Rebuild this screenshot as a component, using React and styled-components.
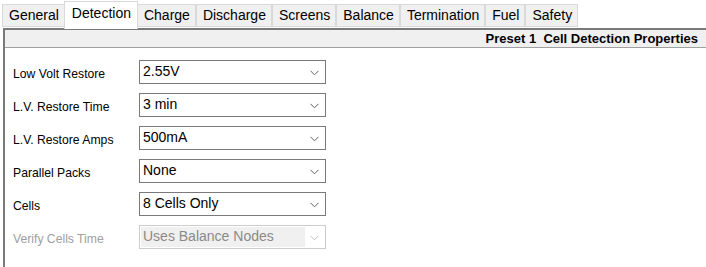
import styled, { createGlobalStyle } from 'styled-components';

const tabs = ['General', 'Detection', 'Charge', 'Discharge', 'Screens', 'Balance', 'Termination', 'Fuel', 'Safety'];

const fields = [
    { label: 'Low Volt Restore', value: '2.55V' },
    { label: 'L.V. Restore Time', value: '3 min' },
    { label: 'L.V. Restore Amps', value: '500mA' },
    { label: 'Parallel Packs', value: 'None' },
    { label: 'Cells', value: '8 Cells Only' },
    { label: 'Verify Cells Time', value: 'Uses Balance Nodes', disabled: true },
];

const GlobalStyle = createGlobalStyle`
  html, body {
    margin: 0;
    padding: 0;
    background: #ffffff;
  }
  body {
    font-family: "Liberation Sans", Arial, sans-serif;
    color: #000;
  }
`;

const Window = styled.div`
  width: 706px;
  height: 267px;
  overflow: hidden;
  background: #ffffff;
  display: flex;
  flex-direction: column;
`;

const TabStrip = styled.div`
  display: flex;
  align-items: flex-end;
  height: 28px;
  padding-left: 2px;
  position: relative;
  z-index: 1;
`;

const Tab = styled.div`
  box-sizing: border-box;
  height: ${props => props.$active ? '28px' : '23px'};
  margin-bottom: ${props => props.$active ? '-1px' : '1px'};
  padding: ${props => props.$active ? '3px 6px 0 7px' : '2px 5px 0 6px'};
  font-size: 14px;
  line-height: 17px;
  background: ${props => props.$active ? '#ffffff' : '#f0f0f0'};
  border: 1px solid #d9d9d9;
  border-bottom: ${props => props.$active ? 'none' : '1px solid #d9d9d9'};
  margin-left: ${props => props.$active ? '-1px' : '0'};
  margin-right: ${props => props.$active ? '-1px' : '0'};
  position: relative;
  z-index: ${props => props.$active ? 2 : 1};
  & + & {
    border-left: ${props => props.$active ? '1px solid #d9d9d9' : 'none'};
  }
  white-space: nowrap;
`;

const Panel = styled.div`
  flex: 1;
  margin-left: 3px;
  border-top: 2px solid #7a7a7a;
  border-left: 2px solid #7a7a7a;
  display: flex;
  flex-direction: column;
`;

const Header = styled.div`
  height: 17px;
  background: #f0f0f0;
  border-bottom: 1px solid #a0a0a0;
  display: flex;
  justify-content: flex-end;
  align-items: center;
  padding-right: 8px;
  font-size: 13px;
  font-weight: bold;
  white-space: pre;
`;

const Form = styled.div`
  display: grid;
  grid-template-columns: 126px 187px;
  grid-auto-rows: 24px;
  row-gap: 9px;
  padding: 12px 0 0 8px;
  align-items: center;
`;

const Label = styled.div`
  font-size: 12.2px;
  padding-top: 3px;
  color: ${props => props.$disabled ? '#a0a0a0' : '#000000'};
  white-space: nowrap;
`;

const Combo = styled.div`
  box-sizing: border-box;
  height: 24px;
  border: 1px solid ${props => props.$disabled ? '#cccccc' : '#7a7a7a'};
  background: #ffffff;
  display: flex;
  align-items: stretch;
  padding: 1px;
`;

const ComboText = styled.div`
  flex: 1;
  font-size: 14px;
  line-height: 19px;
  padding-left: 2px;
  color: ${props => props.$disabled ? '#8a8a8a' : '#000000'};
  background: ${props => props.$disabled ? '#f0f0f0' : 'transparent'};
  white-space: nowrap;
`;

const Arrow = styled.div`
  width: 19px;
  display: flex;
  align-items: center;
  justify-content: center;
  padding-top: 1px;
`;

const Chevron = ({ color }) => (
    <svg width="9" height="6" viewBox="0 0 9 6">
        <polyline points="0.5,0.8 4.5,4.8 8.5,0.8" fill="none" stroke={color} strokeWidth="1" />
    </svg>
);

const App = () => {
    return (
        <Window>
            <GlobalStyle />
            <TabStrip>
                {tabs.map(t => (
                    <Tab key={t} $active={t === 'Detection'}>{t}</Tab>
                ))}
            </TabStrip>
            <Panel>
                <Header>{'Preset 1  Cell Detection Properties'}</Header>
                <Form>
                    {fields.map(f => (
                        <>
                            <Label key={f.label} $disabled={f.disabled}>{f.label}</Label>
                            <Combo key={f.label + '-c'} $disabled={f.disabled}>
                                <ComboText $disabled={f.disabled}>{f.value}</ComboText>
                                <Arrow>
                                    <Chevron color={f.disabled ? '#c4c4c4' : '#606060'} />
                                </Arrow>
                            </Combo>
                        </>
                    ))}
                </Form>
            </Panel>
        </Window>
    );
};

export default App;
